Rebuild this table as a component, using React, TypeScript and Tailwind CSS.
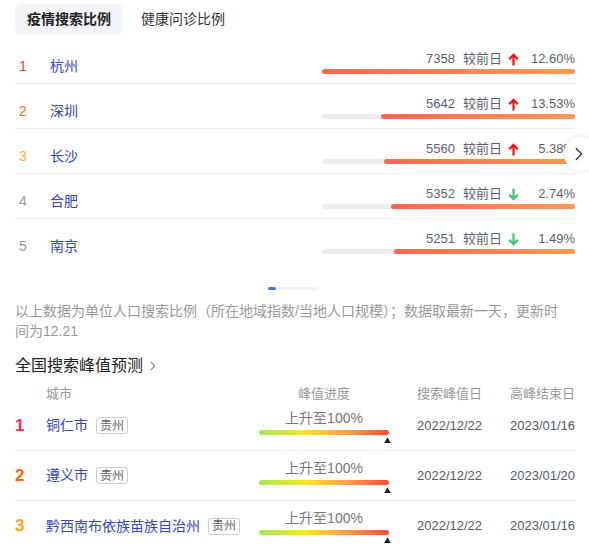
import { ChevronRight } from 'lucide-react';

interface TopRow {
  rank: number;
  city: string;
  value: number;
  up: boolean;
  pct: string;
  fill: number;
}

interface PeakRow {
  rank: number;
  city: string;
  province: string;
  peak: string;
  end: string;
}

const topRows: TopRow[] = [
  { rank: 1, city: '杭州', value: 7358, up: true, pct: '12.60%', fill: 253 },
  { rank: 2, city: '深圳', value: 5642, up: true, pct: '13.53%', fill: 194 },
  { rank: 3, city: '长沙', value: 5560, up: true, pct: '5.38%', fill: 191 },
  { rank: 4, city: '合肥', value: 5352, up: false, pct: '2.74%', fill: 184 },
  { rank: 5, city: '南京', value: 5251, up: false, pct: '1.49%', fill: 181 },
];

const peakRows: PeakRow[] = [
  { rank: 1, city: '铜仁市', province: '贵州', peak: '2022/12/22', end: '2023/01/16' },
  { rank: 2, city: '遵义市', province: '贵州', peak: '2022/12/22', end: '2023/01/20' },
  { rank: 3, city: '黔西南布依族苗族自治州', province: '贵州', peak: '2022/12/22', end: '2023/01/16' },
];

const topRankColor = ['text-[#f5314a]', 'text-[#ff6a1a]', 'text-[#ffab2e]', 'text-[#999999]', 'text-[#999999]'];
const peakRankColor = ['text-[#ff2d4b]', 'text-[#ff6600]', 'text-[#ffa31a]'];

const Arrow = ({ up }: { up: boolean }) => (
  <svg width="11" height="13" viewBox="0 0 11 13" fill="none">
    {up ? (
      <path d="M5.5 12.5V2M1.2 6.2L5.5 1.8L9.8 6.2" stroke="#ff0f0f" strokeWidth="2.2" />
    ) : (
      <path d="M5.5 0.5V11M1.2 6.8L5.5 11.2L9.8 6.8" stroke="#3ec46d" strokeWidth="2.2" />
    )}
  </svg>
);

export default function App() {
  return (
    <div className="bg-white w-[589px] pl-[15px] pr-[14px] pt-[4px] font-['Liberation_Sans','Noto_Sans_CJK_SC',sans-serif]">
      {/* tabs */}
      <div className="flex items-center gap-[6px]">
        <div className="h-[31px] px-3 flex items-center rounded-[6px] bg-[#f4f5f8] text-[14px] font-bold text-[#222]">
          疫情搜索比例
        </div>
        <div className="h-[31px] px-3 flex items-center text-[14px] text-[#333]">健康问诊比例</div>
      </div>

      {/* ranking */}
      <div className="relative mt-[4px]">
        {topRows.map((row, i) => (
          <div
            key={row.rank}
            className={`flex items-start h-[45px] ${i < topRows.length - 1 ? 'border-b border-[#ececec]' : ''}`}
          >
            <div className={`w-[35px] pl-[4px] pt-[17px] text-[14px] leading-[20px] ${topRankColor[i]}`}>{row.rank}</div>
            <div className="flex-1 pt-[17px] text-[14px] leading-[20px] text-[#3446c0]">{row.city}</div>
            <div className="w-[253px] pt-[12px]">
              <div className="flex items-center justify-end h-[16px] text-[13px] text-[#5b5f6b]">
                <span>{row.value}</span>
                <span className="ml-[8px]">较前日</span>
                <span className="ml-[6px] flex items-center">
                  <Arrow up={row.up} />
                </span>
                <span className="w-[56px] text-right">{row.pct}</span>
              </div>
              <div className="mt-[2px] h-[5px] rounded-full bg-[#ededed] flex justify-end">
                <div
                  className="h-full rounded-full bg-gradient-to-r from-[#ff6552] to-[#ff9a52]"
                  style={{ width: row.fill }}
                />
              </div>
            </div>
          </div>
        ))}
        <div className="absolute right-[-23px] top-[98px] w-[34px] h-[34px] rounded-full bg-white shadow-[0_0_6px_rgba(0,0,0,0.12)] flex items-center pl-[4px]">
          <ChevronRight size={22} strokeWidth={1.4} className="text-[#333]" />
        </div>
      </div>

      {/* pager */}
      <div className="mt-[23px] flex justify-center pr-[4px]">
        <div className="w-[50px] h-[3px] rounded-full bg-[#f2f3f6]">
          <div className="w-[8px] h-full rounded-full bg-[#4a6cf7]" />
        </div>
      </div>

      <p className="mt-[11px] text-[14px] leading-[20px] text-[#999]">
        以上数据为单位人口搜索比例（所在地域指数/当地人口规模）；数据取最新一天，更新时
        <br />
        间为12.21
      </p>

      <div className="mt-[13px] flex items-center h-[24px] text-[16px] text-[#222]">
        全国搜索峰值预测
        <ChevronRight size={14} strokeWidth={1.6} className="ml-[3px] text-[#333]" />
      </div>

      {/* peak table */}
      <div className="mt-[9px] flex items-center h-[14px] text-[13px] leading-[14px] text-[#999]">
        <div className="w-[31px]" />
        <div className="flex-1">城市</div>
        <div className="w-[130px] text-center">峰值进度</div>
        <div className="w-[28px]" />
        <div className="w-[93px]">搜索峰值日</div>
        <div className="w-[65px]">高峰结束日</div>
      </div>

      {peakRows.map((row, i) => (
        <div
          key={row.rank}
          className={`flex items-center h-[50px] ${i < peakRows.length - 1 ? 'border-b border-[#ececec]' : ''}`}
        >
          <div className={`w-[31px] text-[17px] font-bold ${peakRankColor[i]}`}>{row.rank}</div>
          <div className="flex-1 flex items-center">
            <span className="text-[14px] text-[#3446c0]">{row.city}</span>
            <span className="ml-[8px] h-[17px] px-[3px] flex items-center border border-[#c8ccd6] rounded-[3px] text-[12px] text-[#666]">
              {row.province}
            </span>
          </div>
          <div className="w-[130px] self-start pt-[8px]">
            <div className="text-center text-[14px] leading-[18px] text-[#777]">上升至100%</div>
            <div className="relative mt-[3px] h-[5px] rounded-full bg-[linear-gradient(90deg,#a5e85a_0%,#f5e52a_35%,#ff9e4a_68%,#ff4a38_100%)]">
              <svg className="absolute right-[-2px] top-[7px]" width="7" height="6" viewBox="0 0 7 6">
                <path d="M3.5 0.3L6.8 6H0.2Z" fill="#1f1f1f" />
              </svg>
            </div>
          </div>
          <div className="w-[28px]" />
          <div className="w-[93px] text-[13px] text-[#555a66]">{row.peak}</div>
          <div className="w-[65px] text-[13px] text-[#555a66]">{row.end}</div>
        </div>
      ))}
    </div>
  );
}
